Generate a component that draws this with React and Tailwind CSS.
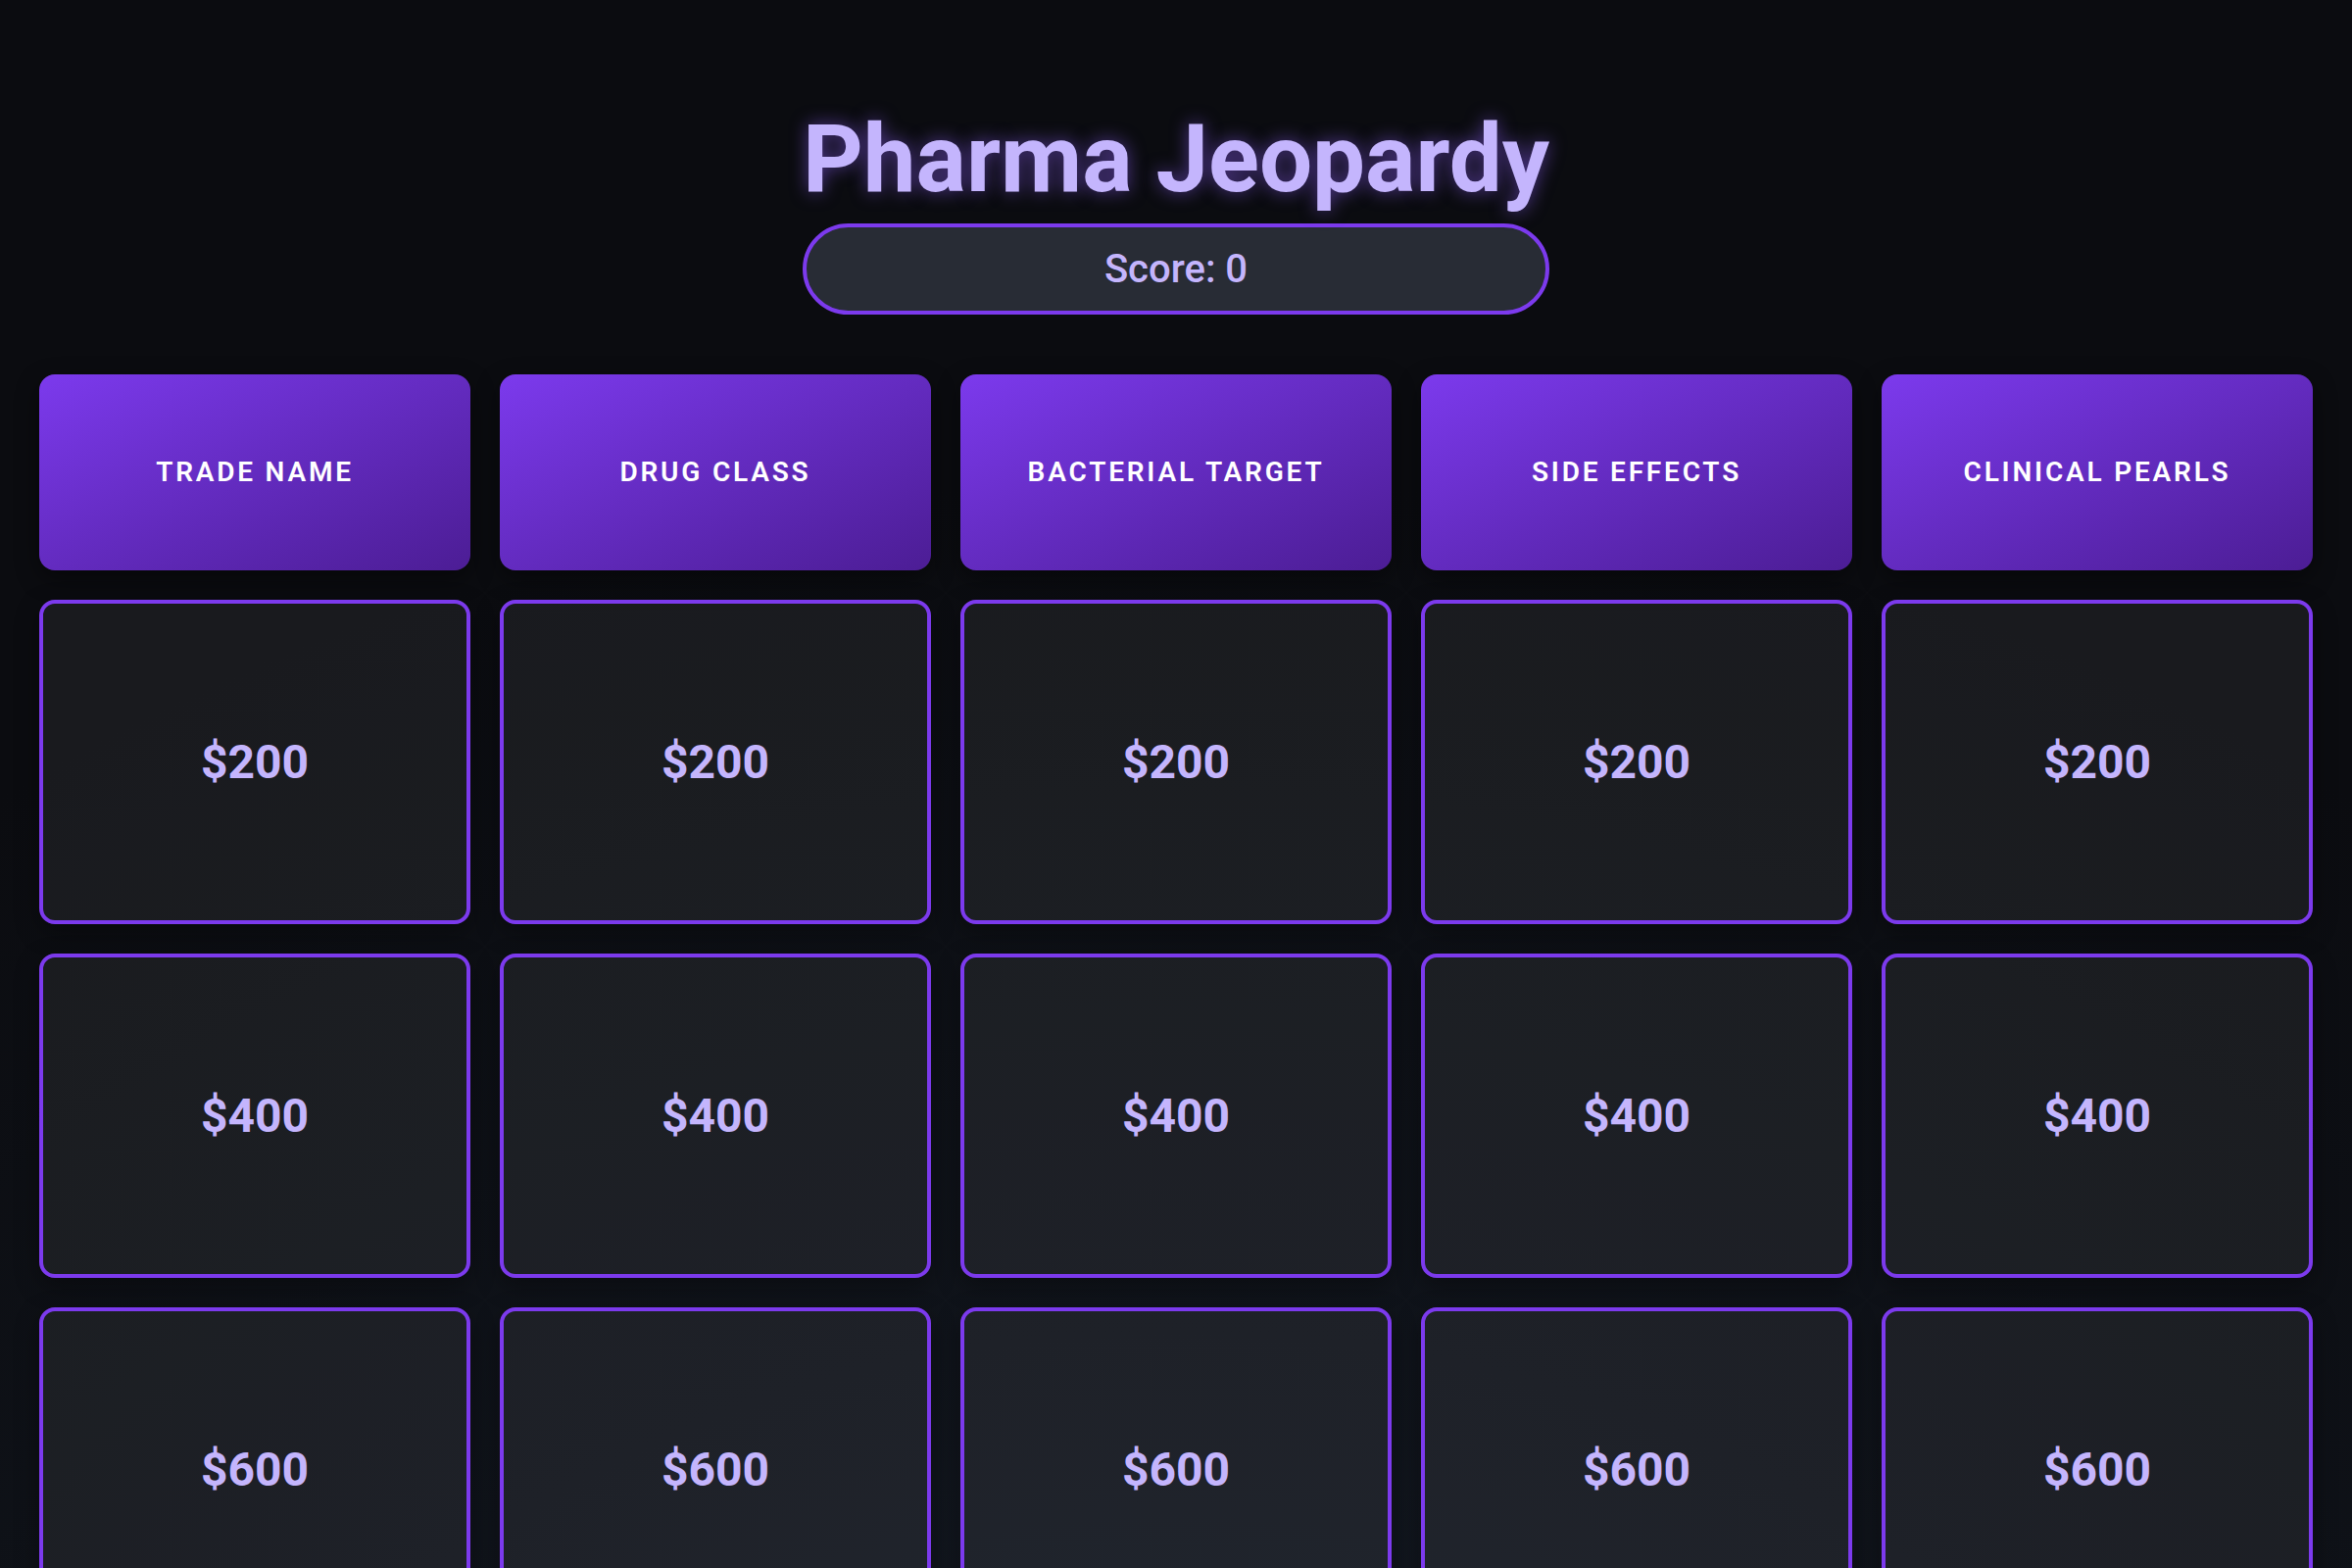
const categories = [
  "Trade Name",
  "Drug Class",
  "Bacterial Target",
  "Side Effects",
  "Clinical Pearls",
];

const values = [200, 400, 600, 800, 1000];

function HeaderCell({ label }) {
  return (
    <div className="h-[200px] flex items-center justify-center rounded-2xl bg-gradient-to-br from-[#7c3aed] to-[#4c1d95] shadow-[0_8px_24px_rgba(0,0,0,0.45)]">
      <span className="text-[28px] font-semibold tracking-[0.1em] uppercase text-white">
        {label}
      </span>
    </div>
  );
}

function ValueCell({ value }) {
  return (
    <button className="h-[331px] flex items-center justify-center rounded-2xl border-4 border-[#7c3aed] bg-white/[0.06] shadow-[0_8px_24px_rgba(0,0,0,0.35)]">
      <span className="text-5xl font-bold text-[#c4b5fd]">${value}</span>
    </button>
  );
}

export default function App() {
  return (
    <div className="min-h-screen px-10 pt-[114px] pb-10 font-['Roboto',sans-serif] bg-[#0b0c10] bg-[radial-gradient(ellipse_90%_80%_at_50%_100%,#19202c_0%,#10141b_55%,#0b0c10_100%)]">
      <h1 className="text-8xl leading-none font-bold text-center text-[#c4b5fd] [text-shadow:0_0_18px_rgba(139,92,246,0.55)]">
        Pharma Jeopardy
      </h1>

      <div className="mx-auto mt-[18px] w-[762px] h-[93px] rounded-full border-4 border-[#7c3aed] bg-[#282c35] flex items-center justify-center">
        <span className="text-[40px] font-medium text-[#c4b5fd]">Score: 0</span>
      </div>

      <div className="mt-[61px] grid grid-cols-5 gap-[30px]">
        {categories.map((c) => (
          <HeaderCell key={c} label={c} />
        ))}
        {values.map((v) =>
          categories.map((c) => <ValueCell key={c + v} value={v} />)
        )}
      </div>
    </div>
  );
}
